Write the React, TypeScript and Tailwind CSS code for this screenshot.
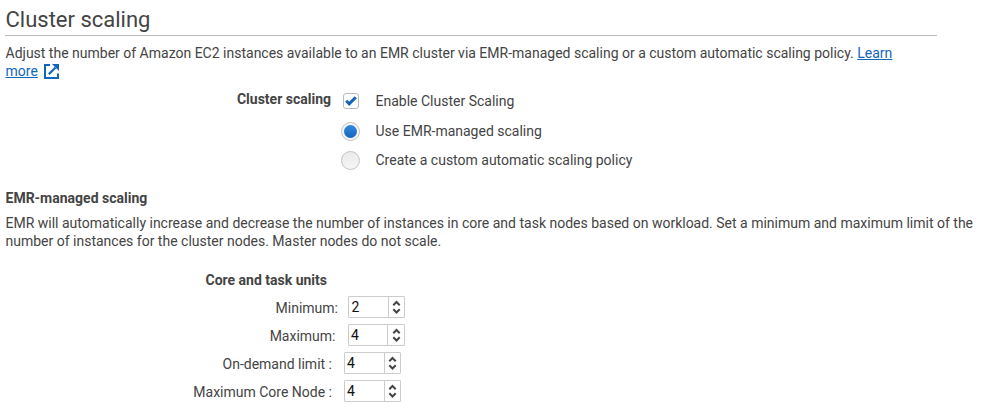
import React from "react";

type Limit = {
  label: string;
  value: string;
  labelClass: string;
  fieldClass: string;
  inputClass: string;
};

const limits: Limit[] = [
  { label: "Minimum:", value: "2", labelClass: "w-[338px]", fieldClass: "ml-[10px]", inputClass: "w-[40px] pl-[2.5px]" },
  { label: "Maximum:", value: "4", labelClass: "w-[335.5px]", fieldClass: "ml-[12.5px]", inputClass: "w-[39px] pl-[2px]" },
  { label: "On-demand limit :", value: "4", labelClass: "w-[332px]", fieldClass: "ml-[12px]", inputClass: "w-[40px] pl-[2px]" },
  { label: "Maximum Core Node :", value: "4", labelClass: "w-[332px]", fieldClass: "ml-[12px]", inputClass: "w-[40px] pl-[2px]" },
];

function ExternalIcon() {
  return (
    <svg className="mt-[2px] ml-[6.5px] inline-block align-top" width="15" height="15" viewBox="0 0 15 15" fill="none" stroke="#1166bb">
      <path d="M6 1H1V14H14V9.5" strokeWidth="2" />
      <path d="M4.8 10.2L11.5 3.5" strokeWidth="2.2" />
      <path d="M8 0H15V7Z" fill="#1166bb" stroke="none" />
    </svg>
  );
}

function NumberField({ limit }: { limit: Limit }) {
  return (
    <div className={"flex h-[22px] w-[57px] rounded-[1px] border border-[#cccccc] bg-white " + limit.fieldClass}>
      <div className={"h-full border-r border-[#cccccc] leading-[21px] text-[#111111] " + limit.inputClass}>{limit.value}</div>
      <div className="flex flex-1 items-center justify-center">
        <svg width="9" height="14" viewBox="0 0 9 14" fill="none" stroke="#444444" strokeWidth="2">
          <path d="M1.3 5.2L4.5 2L7.7 5.2" />
          <path d="M1.3 9.3L4.5 12.5L7.7 9.3" />
        </svg>
      </div>
    </div>
  );
}

export default function App() {
  return (
    <main className="h-[412px] w-[985px] overflow-hidden bg-white font-['Roboto',sans-serif] text-[14px] leading-[18px] text-[#444444]">
      <h1 className="ml-[5px] h-[36px] w-[932px] border-b border-[#bbbbbb] pt-[6px] pl-[0.5px] text-[22px] leading-[27px]">Cluster scaling</h1>
      <p className="mt-[8px] ml-[5.5px] w-[930px]">
        Adjust the number of Amazon EC2 instances available to an EMR cluster via EMR-managed scaling or a custom automatic scaling policy.{" "}
        <a className="text-[#1166bb] underline">Learn</a>
        <br />
        <a className="text-[#1166bb] underline">more</a>
        <ExternalIcon />
      </p>

      <section className="mt-[10px] flex h-[90px]">
        <h2 className="w-[331px] text-right font-bold">Cluster scaling</h2>
        <div className="pl-[10px]">
          <div className="mt-[2px] flex h-[18px] items-center">
            <span className="mr-[16.5px] ml-[2px] flex h-[16px] w-[16px] items-center justify-center rounded-[3px] border border-[#bbbbbb] bg-white">
              <svg className="shrink-0" width="14" height="14" viewBox="0 0 14 14" fill="none" stroke="#1166bb" strokeWidth="3">
                <path d="M2.2 6.8L5.2 9.8L11.8 3.2" />
              </svg>
            </span>
            Enable Cluster Scaling
          </div>
          <div className="mt-[12px] flex h-[18px] items-center">
            <span className="mr-[15.5px] flex h-[19px] w-[19px] items-center justify-center rounded-full border border-[#c4c4c4] bg-[#f5f5f5]">
              <span className="h-[13px] w-[13px] rounded-full bg-linear-to-b from-[#3388dd] to-[#1166bb]" />
            </span>
            Use EMR-managed scaling
          </div>
          <div className="mt-[11px] flex h-[18px] items-center">
            <span className="mr-[15.5px] h-[19px] w-[19px] rounded-full border border-[#c4c4c4] bg-linear-to-b from-[#eaeaea] to-[#f6f6f6]" />
            Create a custom automatic scaling policy
          </div>
        </div>
      </section>

      <h2 className="mt-[9px] ml-[5.5px] font-bold">EMR-managed scaling</h2>
      <p className="mt-[7px] ml-[5.5px] w-[975px]">
        EMR will automatically increase and decrease the number of instances in core and task nodes based on workload. Set a minimum and maximum limit of the
        <br />
        number of instances for the cluster nodes. Master nodes do not scale.
      </p>

      <h2 className="mt-[21px] w-[327px] text-right font-bold">Core and task units</h2>
      <div className="mt-[7px] flex flex-col gap-[6px]">
        {limits.map((limit) => (
          <div key={limit.label} className="flex h-[22px]">
            <span className={"pt-[3px] text-right " + limit.labelClass}>{limit.label}</span>
            <NumberField limit={limit} />
          </div>
        ))}
      </div>
    </main>
  );
}
